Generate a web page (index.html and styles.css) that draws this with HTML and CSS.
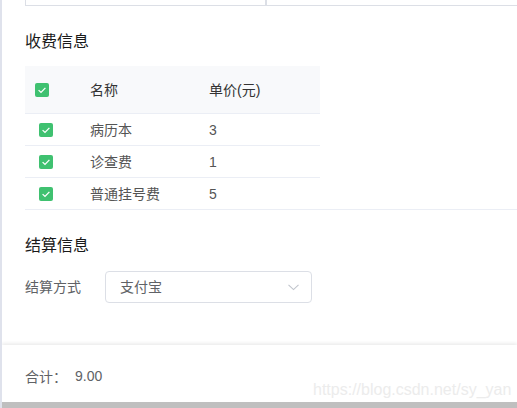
FILE: index.html
```html
<!DOCTYPE html>
<html lang="zh-CN">
<head>
<meta charset="utf-8">
<title>收费信息</title>
<link rel="stylesheet" href="styles.css">
</head>
<body>
<div class="screen">
  <div class="main">
    <div class="top-row">
      <div class="cell cell-left"></div>
      <div class="cell cell-right"></div>
    </div>

    <h3 class="section-title">收费信息</h3>
    <div class="fee-table">
      <div class="row head">
        <div class="c-check"><svg class="checkbox" width="14" height="14" viewBox="0 0 14 14"><rect width="14" height="14" rx="2" fill="#3fc170"/><path d="M3.6 7.1 L6 9.4 L10.4 4.9" fill="none" stroke="#fff" stroke-width="1.3"/></svg></div>
        <div class="c-name">名称</div>
        <div class="c-price">单价(元)</div>
      </div>
      <div class="row body">
        <div class="c-check"><svg class="checkbox" width="14" height="14" viewBox="0 0 14 14"><rect width="14" height="14" rx="2" fill="#3fc170"/><path d="M3.6 7.1 L6 9.4 L10.4 4.9" fill="none" stroke="#fff" stroke-width="1.3"/></svg></div>
        <div class="c-name">病历本</div>
        <div class="c-price">3</div>
      </div>
      <div class="row body">
        <div class="c-check"><svg class="checkbox" width="14" height="14" viewBox="0 0 14 14"><rect width="14" height="14" rx="2" fill="#3fc170"/><path d="M3.6 7.1 L6 9.4 L10.4 4.9" fill="none" stroke="#fff" stroke-width="1.3"/></svg></div>
        <div class="c-name">诊查费</div>
        <div class="c-price">1</div>
      </div>
      <div class="row body last">
        <div class="c-check"><svg class="checkbox" width="14" height="14" viewBox="0 0 14 14"><rect width="14" height="14" rx="2" fill="#3fc170"/><path d="M3.6 7.1 L6 9.4 L10.4 4.9" fill="none" stroke="#fff" stroke-width="1.3"/></svg></div>
        <div class="c-name">普通挂号费</div>
        <div class="c-price">5</div>
      </div>
    </div>

    <h3 class="section-title section-title-2">结算信息</h3>
    <div class="form-row">
      <label class="form-label">结算方式</label>
      <div class="select">
        <span class="select-value">支付宝</span>
        <svg class="chevron" width="11" height="7" viewBox="0 0 11 7"><path d="M0.5 0.8 L5.5 5.6 L10.5 0.8" fill="none" stroke="#c0c4cc" stroke-width="1.1"/></svg>
      </div>
    </div>
  </div>

  <div class="footer">
    <span class="total-label">合计：</span><span class="total-value">9.00</span>
  </div>
  <div class="bottom-bar"></div>
  <div class="watermark">https://blog.csdn.net/sy_yan</div>
</div>
</body>
</html>
```

FILE: styles.css
```css
html, body {
  margin: 0;
  padding: 0;
  background: #fff;
}

body {
  font-family: "Liberation Sans", "Noto Sans CJK SC", sans-serif;
  font-size: 14px;
  color: #606266;
}

.screen {
  position: relative;
  width: 515px;
  height: 408px;
  border-left: 2px solid #dfe2ec;
  display: flex;
  flex-direction: column;
  overflow: hidden;
}

.main {
  flex: 1;
  padding-left: 23px;
}

.top-row {
  display: flex;
  height: 6px;
}

.cell {
  border-bottom: 1px solid #dcdfe6;
  border-left: 1px solid #dcdfe6;
}

.cell-left {
  width: 239px;
  border-right: 1px solid #dcdfe6;
}

.cell-right {
  flex: 1;
}

.section-title {
  margin: 24px 0 12px;
  font-size: 16px;
  line-height: 24px;
  font-weight: normal;
  color: #1a1a1a;
}

.section-title-2 {
  margin: 24px 0 13px;
}

.fee-table {
  border-bottom: 1px solid #ebeef5;
}

.row {
  display: grid;
  grid-template-columns: 65px 119px 111px;
  width: 295px;
  align-items: center;
}

.row.head {
  height: 47px;
  background: #f8f9fb;
  border-bottom: 1px solid #ebeef5;
  color: #333;
}

.row.body {
  height: 31px;
  border-bottom: 1px solid #ebeef5;
  color: #555;
}

.row.body.last {
  border-bottom: none;
}

.c-check {
  display: flex;
  align-items: center;
  padding-left: 10px;
}

.row.body .c-check {
  padding-left: 14px;
}

.checkbox {
  display: block;
}

.c-name,
.c-price {
  line-height: 20px;
}

.form-row {
  display: flex;
  align-items: center;
  height: 32px;
}

.form-label {
  width: 80px;
  color: #606266;
  line-height: 20px;
}

.select {
  box-sizing: border-box;
  width: 207px;
  height: 32px;
  border: 1px solid #dcdfe6;
  border-radius: 4px;
  display: flex;
  align-items: center;
  justify-content: space-between;
  padding: 0 12px 0 14px;
}

.select-value {
  color: #606266;
  line-height: 20px;
}

.chevron {
  display: block;
  margin-top: 1px;
}

.footer {
  height: 53px;
  padding: 4px 0 0 23px;
  display: flex;
  align-items: center;
  background: #fff;
  box-shadow: 0 -2px 3px rgba(0, 0, 0, 0.07);
  color: #606266;
  position: relative;
}

.total-label {
  width: 50px;
}

.bottom-bar {
  height: 6px;
  background: #bfbfbf;
  margin-left: -2px;
}

.watermark {
  position: absolute;
  left: 311px;
  top: 380px;
  font-family: "Liberation Sans", Arial, sans-serif;
  font-size: 16px;
  line-height: 20px;
  color: #ececec;
  white-space: nowrap;
}
```
